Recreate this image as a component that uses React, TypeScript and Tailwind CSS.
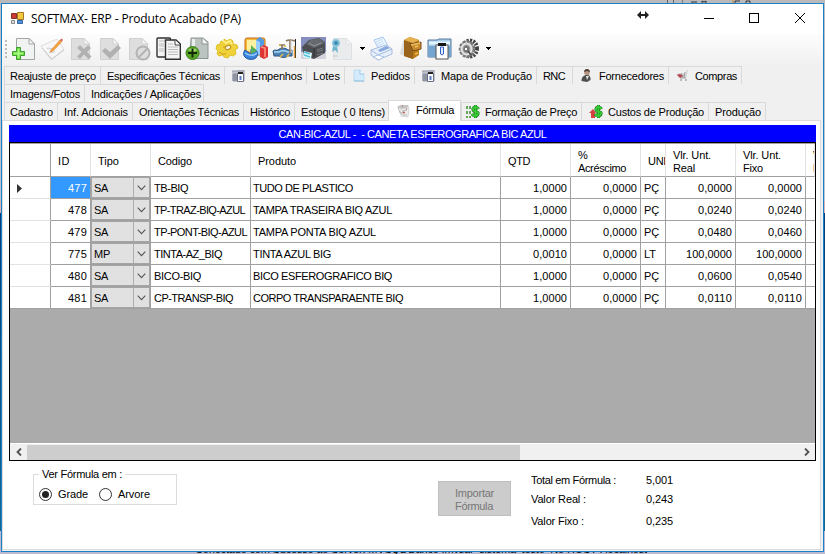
import { useLayoutEffect, useRef, useState } from 'react';
import type { ReactNode } from 'react';

// Label whose letter spacing is adjusted so that it occupies exactly `w` pixels.
function Label({ children, w, className = '' }: { children: string; w: number; className?: string }) {
  const ref = useRef<HTMLSpanElement>(null);
  const [spacing, setSpacing] = useState(0);
  useLayoutEffect(() => {
    const el = ref.current;
    if (!el) return;
    el.style.letterSpacing = '0px';
    const natural = el.getBoundingClientRect().width;
    const next = (w - natural) / children.length;
    el.style.letterSpacing = next + 'px';
    setSpacing(next);
  }, [children, w]);
  return (
    <span ref={ref} className={'inline-block whitespace-pre ' + className} style={{ letterSpacing: spacing }}>
      {children}
    </span>
  );
}

function Icon({ children }: { children: ReactNode }) {
  return (
    <div className="flex w-[29px] shrink-0 justify-center">
      <svg width="25" height="25" viewBox="0 0 25 25" fill="none">{children}</svg>
    </div>
  );
}

function Sheet({ x = 4, fill = '#dedede', stroke = '#d0d0d0' }: { x?: number; fill?: string; stroke?: string }) {
  return (
    <g transform={`translate(${x} 0)`}>
      <path d="M.5 2.5H13L18.5 8v15.500H.5Z" fill={fill} stroke={stroke} />
      <path d="M13 2.500V8h5.500Z" fill="#f7f7f7" stroke={stroke} />
    </g>
  );
}

function Drop() {
  return (
    <div className="flex w-[10px] shrink-0 items-center justify-center">
      <svg width="5" height="3" viewBox="0 0 5 3" shapeRendering="crispEdges"><path d="M0 0h5L2.500 3Z" fill="#000" /></svg>
    </div>
  );
}

function Toolbar() {
  return (
    <div className="flex h-[32px] items-center bg-linear-to-b from-[#fdfdfd] to-[#f0f0f0] pb-[3px] pl-[3px]">
      <div className="flex w-[4px] shrink-0 flex-col gap-[2px]">
        {[0, 1, 2, 3, 4].map((i) => <i key={i} className="h-[2px] w-[2px] bg-[#bcbcbc]" />)}
      </div>
      <Icon>
        <Sheet x={5} fill="#f1f3f2" stroke="#a2a5a5" />
        <path d="M5.500 11.500h4v4h4v4h-4v4h-4v-4h-4v-4h4Z" fill="#72df4f" stroke="#3d9f2c" />
        <path d="M7.500 13v9M3 17.500h9" stroke="#aaff83" strokeWidth="1.500" />
      </Icon>
      <Icon>
        <path d="M1 10 17 3l7 10-13 11Z" fill="#f7f7f7" stroke="#dedede" />
        <path d="m2 12 10 11 12-9" stroke="#c8c8c8" />
        <path d="M7 13c1-3 4 2 5-1m-3 5c3-2 4 1 6-2" stroke="#c4c4c4" />
        <path d="m11 14 9-10 2 1.500-9 9.500-3 1Z" fill="#f3a43b" stroke="#d77c38" strokeWidth=".5" />
        <path d="m20 4 1.500-1.500L23 4l-1.500 1.500Z" fill="#d75858" />
      </Icon>
      <Icon>
        <Sheet x={2} />
        <path d="m8 12 3-3 4 4 4-4 3 3-4 4 4.500 4.500-3 2.500-4.500-4.500L11 23l-3-2.500 4.500-4.500Z" fill="#b1b1b1" />
      </Icon>
      <Icon>
        <Sheet x={2} />
        <path d="m4 15 3-3 5 4 8-7 3 3-11 11Z" fill="#b1b1b1" />
      </Icon>
      <Icon>
        <Sheet x={2} />
        <circle cx="16" cy="17" r="6.500" fill="#dedede" stroke="#b3b3b3" strokeWidth="2" />
        <path d="m12 21 8-8" stroke="#b3b3b3" strokeWidth="2" />
      </Icon>
      <Icon>
        <rect x="1" y="2" width="13.500" height="19" rx="1" fill="#f3f3f3" stroke="#303030" strokeWidth="1.400" />
        <path d="M3 5h7M3 8h5M3 10h5M3 13h5M3 15h5" stroke="#b9b9b9" />
        <path d="M9.500 4H20l4.300 4v15.300H9.500Z" fill="#f4f4f4" stroke="#303030" strokeWidth="1.400" />
        <path d="M19 4v5h5" fill="#fff" stroke="#444" />
        <path d="M12 8h5m-5 3h10m-10 2.500h10M12 16h10m-10 2.500h10" stroke="#bbb" />
      </Icon>
      <Icon>
        <path d="M6 2h12l5 4v16.500H5Z" fill="#bcc4c2" stroke="#8b9494" />
        <path d="M17 2v6h6" fill="#f4f7f6" stroke="#899090" />
        <path d="M8.500 3v13" stroke="#e9eded" strokeWidth="3" />
        <circle cx="7.500" cy="17" r="6.500" fill="#58a525" stroke="#397c17" />
        <path d="M3 14a6 5 0 0 1 9 0l-3 2Z" fill="#a5d677" />
        <path d="M7.500 12.500v9M3 17h9" stroke="#102808" strokeWidth="2" />
      </Icon>
      <Icon>
        <path d="m10 3 3 2 3-2 3 2v3l4 1 1 3-3 2 1 4-3 2-3-1-2 3-4-1-1-2-4 1-2-2 1-3-2-2 1-4 3-1 1-3 3 1Z" fill="#efd239" stroke="#dfc02b" />
        <path d="m9 5 3 2 4-2 2 3" stroke="#ffee83" strokeWidth="2" />
        <ellipse cx="14" cy="11.500" rx="2.800" ry="2" fill="#f7f4df" stroke="#bc8e20" transform="rotate(-25 14 11.500)" />
        <path d="m5 16 3 2 4 0m-2-8v2" stroke="#c99b21" />
      </Icon>
      <Icon>
        <rect x="2" y="2" width="20" height="17" rx="2" fill="#f6bb39" stroke="#c66d1d" />
        <path d="M4 4h15v11H4Z" fill="#fff0a0" />
        <path d="m13 4 4-3 4 3v15h-8Z" fill="#529ae1" />
        <path d="m13 4 4 2v13l-4-2Z" fill="#98ceff" />
        <path d="m17 11 4-2 4 2v10l-4 2-4-2Z" fill="#dd3535" />
        <path d="m18 11 4 1v9" stroke="#ff9b80" strokeWidth="1.500" />
        <path d="M8 13c7-2 9 8 3 10C3 25-2 19 2 14l6 4Z" fill="#3c85dc" stroke="#2258ac" />
        <path d="m8 9 6 6-6 3Z" fill="#58b15a" />
        <path d="M2 17c4 3 9 3 12 0" stroke="#9acaff" strokeWidth="1.500" />
      </Icon>
      <Icon>
        <path d="M1 15c2-2 4 0 5-1 3-3 8-2 10 0h4v6h-4c-3 2-6 2-9 0H2Z" fill="#4d83b5" stroke="#31557f" />
        <path d="M2 16h5c3-2 5-2 9 0h4" stroke="#a5d6f2" strokeWidth="1.500" />
        <path d="M10 13V9m-3 0h6M14 5c3-2 6-1 9 0M18 4v14" stroke="#8c775f" strokeWidth="1.700" />
        <path d="M19 4v12" stroke="#d5d1ca" />
        <path d="M23.500 3v19" stroke="#282828" />
        <path d="M22.500 10v12" stroke="#e0a33e" strokeWidth="1.500" />
        <path d="M7 9h2m3 1h2M8 21l3-3m4 3 2-3" stroke="#e3b947" strokeWidth="1.500" />
      </Icon>
      <Icon>
        <path d="M0 1h25v22H0Z" fill="#858ebc" />
        <path d="M0 16h25v7H0Z" fill="#d2d3dc" />
        <path d="m1 11 7-7 10-2 6 4v11l-11 6-10-3Z" fill="#4b4d51" />
        <path d="m5 8 8 4 11-5-6-5-9 2Z" fill="#66696e" />
        <path d="m8 7 5 3 7-3" stroke="#929599" />
        <path d="M13 12v9" stroke="#393a3d" strokeWidth="1.500" />
        <path d="m3 15 8 2-1 6-8-2Z" fill="#e2faff" />
        <path d="m3 16 6 2m-6 1 6 2" stroke="#4dbfd4" strokeWidth="1.500" />
        <path d="m16 14 6-2m-6 4 6-2m-6 5 6-2" stroke="#777d82" />
      </Icon>
      <Icon>
        <Sheet x={3} fill="#e9ebec" stroke="#dde0e2" />
        <path d="m3 10-1 6 3-2 3 3-1-7" fill="#6fb4cf" />
        <circle cx="6" cy="7" r="3.500" fill="#5fa9cb" stroke="#9ccedd" strokeWidth="1.500" />
        <circle cx="6" cy="7" r="1.300" fill="#327da5" />
        <path d="M3 20h5" stroke="#c7cbcf" />
      </Icon>
      <Drop />
      <Icon>
        <path d="m5 4 9-3 5 9-9 4Z" fill="#edf6ff" stroke="#a5c8ee" />
        <path d="m7 6 6-3m-5 5 6-3m-5 5 6-3" stroke="#c0dcf8" />
        <path d="m2 14 15-5 6 4v5l-14 6-7-5Z" fill="#e5effa" stroke="#a9bbdf" />
        <path d="m2 14 7 5 14-6M9 19v5" stroke="#a7bbe0" />
        <path d="m9 14 8-4 4 2-10 4Z" fill="#85a8dc" />
        <path d="m4 21 5-2 6 2-5 3Z" fill="#fff" stroke="#acc3e4" />
      </Icon>
      <Icon>
        <path d="m2 18 3-13 5-3v19Z" fill="#c4c4c4" opacity=".5" />
        <path d="m6 4 6-3 9 3v15l-6 4-9-3Z" fill="#bb7b17" />
        <path d="m6 4 9 3v16l-9-3Z" fill="#99651c" />
        <path d="m6 4 6-3 9 3-6 3Z" fill="#e4b24f" />
        <path d="m12 8 11-2v7l-8 2Z" fill="#c68b2d" stroke="#7b4e18" />
        <path d="m13 9 9-2m-5 4 3-1m-3 8 3-1" stroke="#edbf61" strokeWidth="1.500" />
      </Icon>
      <Icon>
        <path d="M1 4h9l2-1h12v18H1Z" fill="#a8cdea" stroke="#58779a" />
        <path d="M1 10h23v11H1Z" fill="#75a6cf" />
        <path d="M2 7h21" stroke="#e2f5ff" strokeWidth="3" />
        <rect x="9" y="9" width="12" height="14" fill="#fff" stroke="#555" />
        <path d="M11 7h8v3h-8Z" fill="#151515" />
        <path d="M13.500 18v-7h3v7l-1.500 1Z" fill="#ddecff" stroke="#2e5fc5" />
      </Icon>
      <Icon>
        <ellipse cx="14" cy="12.500" rx="7" ry="8" stroke="#444" strokeWidth="4" strokeDasharray="2 1.200" />
        <ellipse cx="11" cy="13" rx="7" ry="7.500" fill="#a6a6a6" stroke="#777" strokeWidth="2.500" strokeDasharray="3 1.200" />
        <ellipse cx="10.500" cy="13" rx="5" ry="5.500" stroke="#e2e2e2" strokeWidth="2" />
        <ellipse cx="10.500" cy="13" rx="3" ry="3.500" fill="#777" />
        <circle cx="10" cy="13" r="1.700" fill="#fff" stroke="#565656" strokeWidth=".7" />
        <path d="m12 15 3 4" stroke="#444" strokeWidth="1.500" />
      </Icon>
      <Drop />
    </div>
  );
}

type TabIcon = 'folder' | 'page' | 'user' | 'cart' | 'formula' | 'price' | 'cost';

function TabPicture({ kind }: { kind: TabIcon }) {
  return (
    <svg width="16" height="16" viewBox="0 0 16 16" fill="none" className="shrink-0">
      {kind === 'folder' && <>
        <path d="M1 3h5l1-1h7v11H1Z" fill="#c3c6cd" />
        <path d="M1 3h12M2 6h4v7H2Z" stroke="#9197a2" fill="#8e96a3" />
        <path d="M6.500 5.500h6v8h-6Z" fill="#fff" stroke="#6a7082" /><path d="M7 5h5" stroke="#222" strokeWidth="2" /><path d="M9.500 8v4" stroke="#5977bd" strokeWidth="2" />
      </>}
      {kind === 'page' && <>
        <path d="M3 2h6l4 4v7H3Z" fill="#d4ebfc" stroke="#bcdcf3" /><path d="M9 2v4h4" fill="#fff" stroke="#97c5e8" /><path d="M3 13h10" stroke="#91bbdd" />
      </>}
      {kind === 'user' && <>
        <path d="M2.500 13c0-4 2-5 4-6h3c2 1 2 3 2 5L8 14Z" fill="#4e4e4e" /><circle cx="8" cy="4.500" r="2.800" fill="#b59683" /><path d="M5 4c0-4 6-4 6 0L8 3Z" fill="#4a3b33" /><path d="m7 8 1 4 2-4Z" fill="#e9e9e9" />
      </>}
      {kind === 'cart' && <>
        <path d="m1 6 9-1 2-3h1l-2 8H5Z" fill="#d2d5d7" /><path d="m3 6 7 2M5 10h6M6 5l2 5m2-6-1 6" stroke="#a5a5a5" /><path d="m2 7 3-1 3 2-3 2Z" fill="#b84450" /><circle cx="6" cy="12" r="1" fill="#aaa" /><circle cx="11" cy="12" r="1" fill="#aaa" />
      </>}
      {kind === 'formula' && <>
        <path d="m4 5 9 0-1 9-7-1Z" fill="#ededed" stroke="#d6d6d6" /><path d="m1 4 3-2 8 0 1 2-7 2Z" fill="#c4c4c4" /><path d="m2 4 2 6 3-1M6 8l5-1M7 12h4m-5-3v3" stroke="#b9b9b9" /><circle cx="8" cy="9.500" r="1" fill="#bd4f4f" /><path d="M6 3h1M10 6h1" stroke="#bd4f4f" />
      </>}
      {kind === 'price' && <path d="M2 2v3m0 2v3m0 2v2m3-12v3m0 2v3m0 2v2" stroke="#65a75b" strokeWidth="2" />}
      {kind === 'cost' && <path d="m1 9 4-4 3 4H7v5H3V9Z" fill="#d3423c" />}
      {(kind === 'price' || kind === 'cost') && <>
        <path d="M13.500 5C12 2 7 3 8 6s6 1 5 4-5 2-6 0M10.500 1v13" stroke="#176c1c" strokeWidth="3" />
        <path d="M13.500 5C12 2 7 3 8 6s6 1 5 4-5 2-6 0M10.500 1v13" stroke="#38cd35" strokeWidth="1.800" />
      </>}
    </svg>
  );
}

type TabDef = { text: string; w: number; box: string; icon?: TabIcon; selected?: boolean; first?: boolean; last?: boolean };

const tabRows: TabDef[][] = [
  [
    { text: 'Reajuste de preço', w: 86, box: 'w-[96px]', first: true },
    { text: 'Especificações Técnicas', w: 113, box: 'w-[124px]' },
    { text: 'Empenhos', w: 51, box: 'w-[82px]', icon: 'folder' },
    { text: 'Lotes', w: 27, box: 'w-[38px]' },
    { text: 'Pedidos', w: 39, box: 'w-[70px]', icon: 'page' },
    { text: 'Mapa de Produção', w: 91, box: 'w-[122px]', icon: 'folder' },
    { text: 'RNC', w: 22, box: 'w-[36px]' },
    { text: 'Fornecedores', w: 65, box: 'w-[96px]', icon: 'user' },
    { text: 'Compras', w: 42, box: 'w-[74px]', icon: 'cart', last: true },
  ],
  [
    { text: 'Imagens/Fotos', w: 70, box: 'w-[80px]', first: true },
    { text: 'Indicações / Aplicações', w: 110, box: 'w-[120px]', last: true },
  ],
  [
    { text: 'Cadastro', w: 43, box: 'w-[53px]', first: true },
    { text: 'Inf. Adcionais', w: 64, box: 'w-[75px]' },
    { text: 'Orientações Técnicas', w: 100, box: 'w-[111px]' },
    { text: 'Histórico', w: 40, box: 'w-[51px]' },
    { text: 'Estoque ( 0 Itens)', w: 84, box: 'w-[94px]' },
    { text: 'Fórmula', w: 38, box: 'w-[73px]', icon: 'formula', selected: true },
    { text: 'Formação de Preço', w: 92, box: 'w-[120px]', icon: 'price' },
    { text: 'Custos de Produção', w: 96, box: 'w-[127px]', icon: 'cost' },
    { text: 'Produção', w: 46, box: 'w-[58px]', last: true },
  ],
];

function Tab({ tab }: { tab: TabDef }) {
  const shape = tab.selected
    ? 'z-10 -mt-[2px] h-[21px] border-x bg-white pb-[1px] pl-[7px]'
    : 'h-[18px] border-l pt-px ' + (tab.first ? 'pl-[5px]' : tab.icon === 'price' ? 'pl-[3px]' : 'pl-[6px]');
  return (
    <div className={`relative flex shrink-0 items-center border-t border-[#d9d9d9] ${shape} ${tab.box} ${tab.last ? 'border-r' : ''}`}>
      {tab.icon && <span className="mr-[4px] flex w-[16px] shrink-0">
        <TabPicture kind={tab.icon} />
      </span>}
      <Label w={tab.w}>{tab.text}</Label>
    </div>
  );
}

const columns = 'grid grid-cols-[41px_40px_60px_100px_250px_70px_70px_25px_70px_70px_9px]';

type Row = { id: string; tipo: string; tw: number; cod: string; cw: number; prod: string; pw: number; qtd: string; un: string; real: string; fixo: string };
const rows: Row[] = [
  { id: '477', tipo: 'SA', tw: 14, cod: 'TB-BIQ', cw: 34, prod: 'TUDO DE PLASTICO', pw: 100, qtd: '1,0000', un: 'PÇ', real: '0,0000', fixo: '0,0000' },
  { id: '478', tipo: 'SA', tw: 14, cod: 'TP-TRAZ-BIQ-AZUL', cw: 91, prod: 'TAMPA TRASEIRA BIQ AZUL', pw: 139, qtd: '1,0000', un: 'PÇ', real: '0,0240', fixo: '0,0240' },
  { id: '479', tipo: 'SA', tw: 14, cod: 'TP-PONT-BIQ-AZUL', cw: 93, prod: 'TAMPA PONTA BIQ AZUL', pw: 123, qtd: '1,0000', un: 'PÇ', real: '0,0480', fixo: '0,0460' },
  { id: '775', tipo: 'MP', tw: 16, cod: 'TINTA-AZ_BIQ', cw: 68, prod: 'TINTA AZUL BIG', pw: 78, qtd: '0,0010', un: 'LT', real: '100,0000', fixo: '100,0000' },
  { id: '480', tipo: 'SA', tw: 14, cod: 'BICO-BIQ', cw: 47, prod: 'BICO ESFEROGRAFICO BIQ', pw: 139, qtd: '1,0000', un: 'PÇ', real: '0,0600', fixo: '0,0540' },
  { id: '481', tipo: 'SA', tw: 14, cod: 'CP-TRANSP-BIQ', cw: 79, prod: 'CORPO TRANSPARAENTE BIQ', pw: 150, qtd: '1,0000', un: 'PÇ', real: '0,0110', fixo: '0,0110' },
];

function Num({ value }: { value: string }) {
  return <div className="flex items-center justify-end border-r border-b border-[#a0a0a0] pr-[3px] pt-[2px]"><Label w={value.length > 6 ? 46 : 34}>{value}</Label></div>;
}

function Head({ lines, first = false }: { lines: [string, number][]; first?: boolean }) {
  return (
    <div className={`flex flex-col justify-center overflow-hidden border-r border-b border-b-[#a0a0a0] pl-[7px] pt-[3px] leading-[13px] ${first ? 'border-r-[#a0a0a0]' : 'border-r-[#e3e3e3]'}`}>
      {lines.map(([t, w]) => <div key={t}><Label w={w}>{t}</Label></div>)}
    </div>
  );
}

function DataGrid() {
  return (
    <div className="flex h-[319px] w-[807px] flex-col overflow-hidden border border-black bg-[#ababab]">
      <div className="h-px bg-[#a0a0a0]" />
      <div className={`${columns} h-[33px] bg-white`}>
        <Head first lines={[]} />
        <Head lines={[['ID', 12]]} />
        <Head lines={[['Tipo', 21]]} />
        <Head lines={[['Codigo', 34]]} />
        <Head lines={[['Produto', 38]]} />
        <Head lines={[['QTD', 22]]} />
        <Head lines={[['%', 10], ['Acréscimo', 48]]} />
        <Head lines={[['UNI', 18]]} />
        <Head lines={[['Vlr. Unt.', 38], ['Real', 22]]} />
        <Head lines={[['Vlr. Unt.', 38], ['Fixo', 20]]} />
        <Head lines={[['Vlr.', 16], ['Fixo', 20]]} />
      </div>
      {rows.map((r, i) => (
        <div key={r.id} className={`${columns} h-[22px] shrink-0 bg-white`}>
          <div className={`flex items-center border-r border-b border-r-[#a0a0a0] pl-[7px] pt-[2px] ${i === 5 ? 'border-b-[#a0a0a0]' : 'border-b-[#e3e3e3]'}`}>
            {i === 0 && <svg width="5" height="9" viewBox="0 0 5 9"><path d="M0 0v9l5-4.500Z" fill="#333" /></svg>}
          </div>
          <div className={`flex items-center justify-end border-r border-b border-[#a0a0a0] pr-[3px] pt-[2px] ${i === 0 ? 'bg-[#3399ff] text-white' : ''}`}><Label w={19}>{r.id}</Label></div>
          <div className="flex border-r border-b border-[#a0a0a0]">
            <div className="flex w-full border border-[#a5a5a5] bg-[#e1e1e1]">
              <div className="flex grow items-center border-r border-[#adadad] pl-[2px] pt-[2px]"><Label w={r.tw}>{r.tipo}</Label></div>
              <div className="flex w-[15px] items-center justify-center">
                <svg width="9" height="6" viewBox="0 0 9 6" fill="none"><path d="m.7.700 3.800 4 3.800-4" stroke="#555" strokeWidth="1.100" /></svg>
              </div>
            </div>
          </div>
          <div className="flex items-center border-r border-b border-[#a0a0a0] pl-[3px] pt-[2px]"><Label w={r.cw}>{r.cod}</Label></div>
          <div className="flex items-center border-r border-b border-[#a0a0a0] pl-[2px] pt-[2px]"><Label w={r.pw}>{r.prod}</Label></div>
          <Num value={r.qtd} />
          <Num value="0,0000" />
          <div className="flex items-center border-r border-b border-[#a0a0a0] pl-[3px] pt-[2px]"><Label w={r.un === 'LT' ? 12 : 15}>{r.un}</Label></div>
          <Num value={r.real} />
          <Num value={r.fixo} />
          <div className="border-b border-[#a0a0a0]" />
        </div>
      ))}
      <div className="mt-auto flex h-[17px] shrink-0 items-center border-t border-white bg-[#f0f0f0]">
        <div className="flex w-[17px] justify-center"><svg width="6" height="8" viewBox="0 0 6 8" fill="none"><path d="M5 .5 1.500 4 5 7.500" stroke="#505050" strokeWidth="1.800" /></svg></div>
        <div className="h-[15px] w-[493px] bg-[#cdcdcd]" />
        <div className="ml-auto flex w-[17px] justify-center"><svg width="6" height="8" viewBox="0 0 6 8" fill="none"><path d="M1 .5 4.500 4 1 7.500" stroke="#505050" strokeWidth="1.800" /></svg></div>
      </div>
    </div>
  );
}

function Radio({ on = false }: { on?: boolean }) {
  return <span className="flex h-[13px] w-[13px] items-center justify-center rounded-full border border-[#333]">{on && <i className="h-[7px] w-[7px] rounded-full bg-[#222]" />}</span>;
}

function Total({ name, w, value, className = '' }: { name: string; w: number; value: string; className?: string }) {
  return (
    <div className={'flex ' + className}>
      <div className="w-[115px]"><Label w={w}>{name}</Label></div>
      <Label w={27}>{value}</Label>
    </div>
  );
}

function Footer() {
  return (
    <div className="flex pl-[24px] pt-[7px]">
      <fieldset className="h-[37px] w-[144px] border border-[#dcdcdc] pl-[5px]">
        <legend className="ml-0 h-[13px] px-[3px] leading-[13px]"><Label w={80}>Ver Fórmula em :</Label></legend>
        <div className="mt-[7px] flex h-[13px] items-center">
          <Radio on /><Label w={30} className="ml-[6px]">Grade</Label>
          <span className="ml-[11px]"><Radio /></span><Label w={32} className="ml-[6px]">Arvore</Label>
        </div>
      </fieldset>
      <button className="ml-[261px] mt-[13px] flex h-[35px] w-[73px] flex-col items-start justify-center border border-[#bfbfbf] bg-[#cccccc] pl-[16px] pt-[2px] leading-[13px] text-[#777]">
        <Label w={39}>Importar</Label><Label w={38}>Fórmula</Label>
      </button>
      <div className="ml-[20px] mt-[6px] leading-[13px]">
        <Total name="Total em Fórmula :" w={85} value="5,001" />
        <Total name="Valor Real :" w={55} value="0,243" className="mt-[6px]" />
        <Total name="Valor Fixo :" w={53} value="0,235" className="mt-[9px]" />
      </div>
    </div>
  );
}

function TitleBar() {
  return (
    <div className="flex h-[30px] shrink-0 items-center bg-white pl-[9px]">
      <svg width="15" height="15" viewBox="0 0 15 15" className="mb-[2px]">
        <path d="M.5 2.500h5v5h-5Z" fill="#c83b32" stroke="#8e2b27" /><path d="M6.500 1.500h6v7h-6Z" fill="#f6c63e" stroke="#a27724" />
        <path d="M.5 9.500h3v3h-3Z" fill="#ddd" stroke="#888" /><path d="M6.500 9.500h5v3h-5Z" fill="#5595dd" stroke="#3465a5" />
      </svg>
      <Label w={210} className="ml-[5px] font-['Open_Sans',sans-serif] text-[12px] leading-[16px]">SOFTMAX- ERP - Produto Acabado (PA)</Label>
      <svg width="12" height="8" viewBox="0 0 12 8" className="mb-[9px] ml-[396px]"><path d="M0 4 4 0v3h4V0l4 4-4 4V5H4v3Z" fill="#222" /></svg>
      <svg width="101" height="11" viewBox="0 0 101 11" fill="none" stroke="#000" className="mb-[2px] ml-[55px]" shapeRendering="crispEdges">
        <path d="M0 5.500h10M45.500.500h9v9h-9Z" /><path d="m91 0 10 10m0-10-10 10" shapeRendering="auto" />
      </svg>
    </div>
  );
}

export default function App() {
  return (
    <div className="relative h-[554px] w-[825px] overflow-hidden bg-[#c9cbd2] font-['Liberation_Sans',Arial,sans-serif] text-[11px] leading-[13px] text-black">
      <div className="flex h-full flex-col">
        <div className="flex h-[3px] shrink-0 bg-[#bababa]">
          <div className="ml-[667px] w-px bg-[#666]" /><div className="ml-[5px] w-px bg-[#666]" /><div className="ml-[8px] w-px bg-[#777]" />
          <svg width="90" height="3" viewBox="0 0 90 3" className="ml-[8px]"><path d="M0 2h6m5 1V1l2 1 2-1v2m29 0V1h5m6 2V1h4v2" stroke="#333" fill="none" /><path d="M42 0v3" stroke="#cf8437" /></svg>
        </div>
        <div className="h-[198px] shrink-0 bg-linear-to-b from-[#b9bdc4] to-[#bdc7d3]" />
        <div className="h-[12px] shrink-0 bg-[#d8b2b5]" />
        <div className="h-[318px] shrink-0 bg-linear-to-b from-[#073d78] to-[#17698f]" />
        <div className="flex grow items-end bg-[#bbbad0] pl-[195px]"><Label w={452} className="mb-[-2px]">Conectado com Sucesso ao Server: MVSQL Banco :mvsar  sistema  testo  No HOST : localhost</Label></div>
      </div>
      <section className="absolute left-[1px] top-[3px] flex h-[549px] w-[823px] flex-col border border-[#1b80ca] bg-[#f0f0f0]">
        <TitleBar />
        <Toolbar />
        <div className="flex flex-col pl-[2px]">
          {tabRows.map((tabs, i) => <div key={i} className="flex h-[18px]">{tabs.map((t) => <Tab key={t.text} tab={t} />)}</div>)}
        </div>
        <main className="mr-[2px] flex h-[430px] flex-col border border-[#dcdcdc] bg-white pl-[6px] pt-[4px]">
          <div className="flex h-[17px] w-[807px] shrink-0 items-center justify-center bg-[#0000ff] pt-[2px] text-white"><Label w={268}>CAN-BIC-AZUL -  - CANETA ESFEROGRAFICA BIC AZUL</Label></div>
          <div className="shrink-0"><DataGrid /></div>
          <Footer />
        </main>
      </section>
    </div>
  );
}
